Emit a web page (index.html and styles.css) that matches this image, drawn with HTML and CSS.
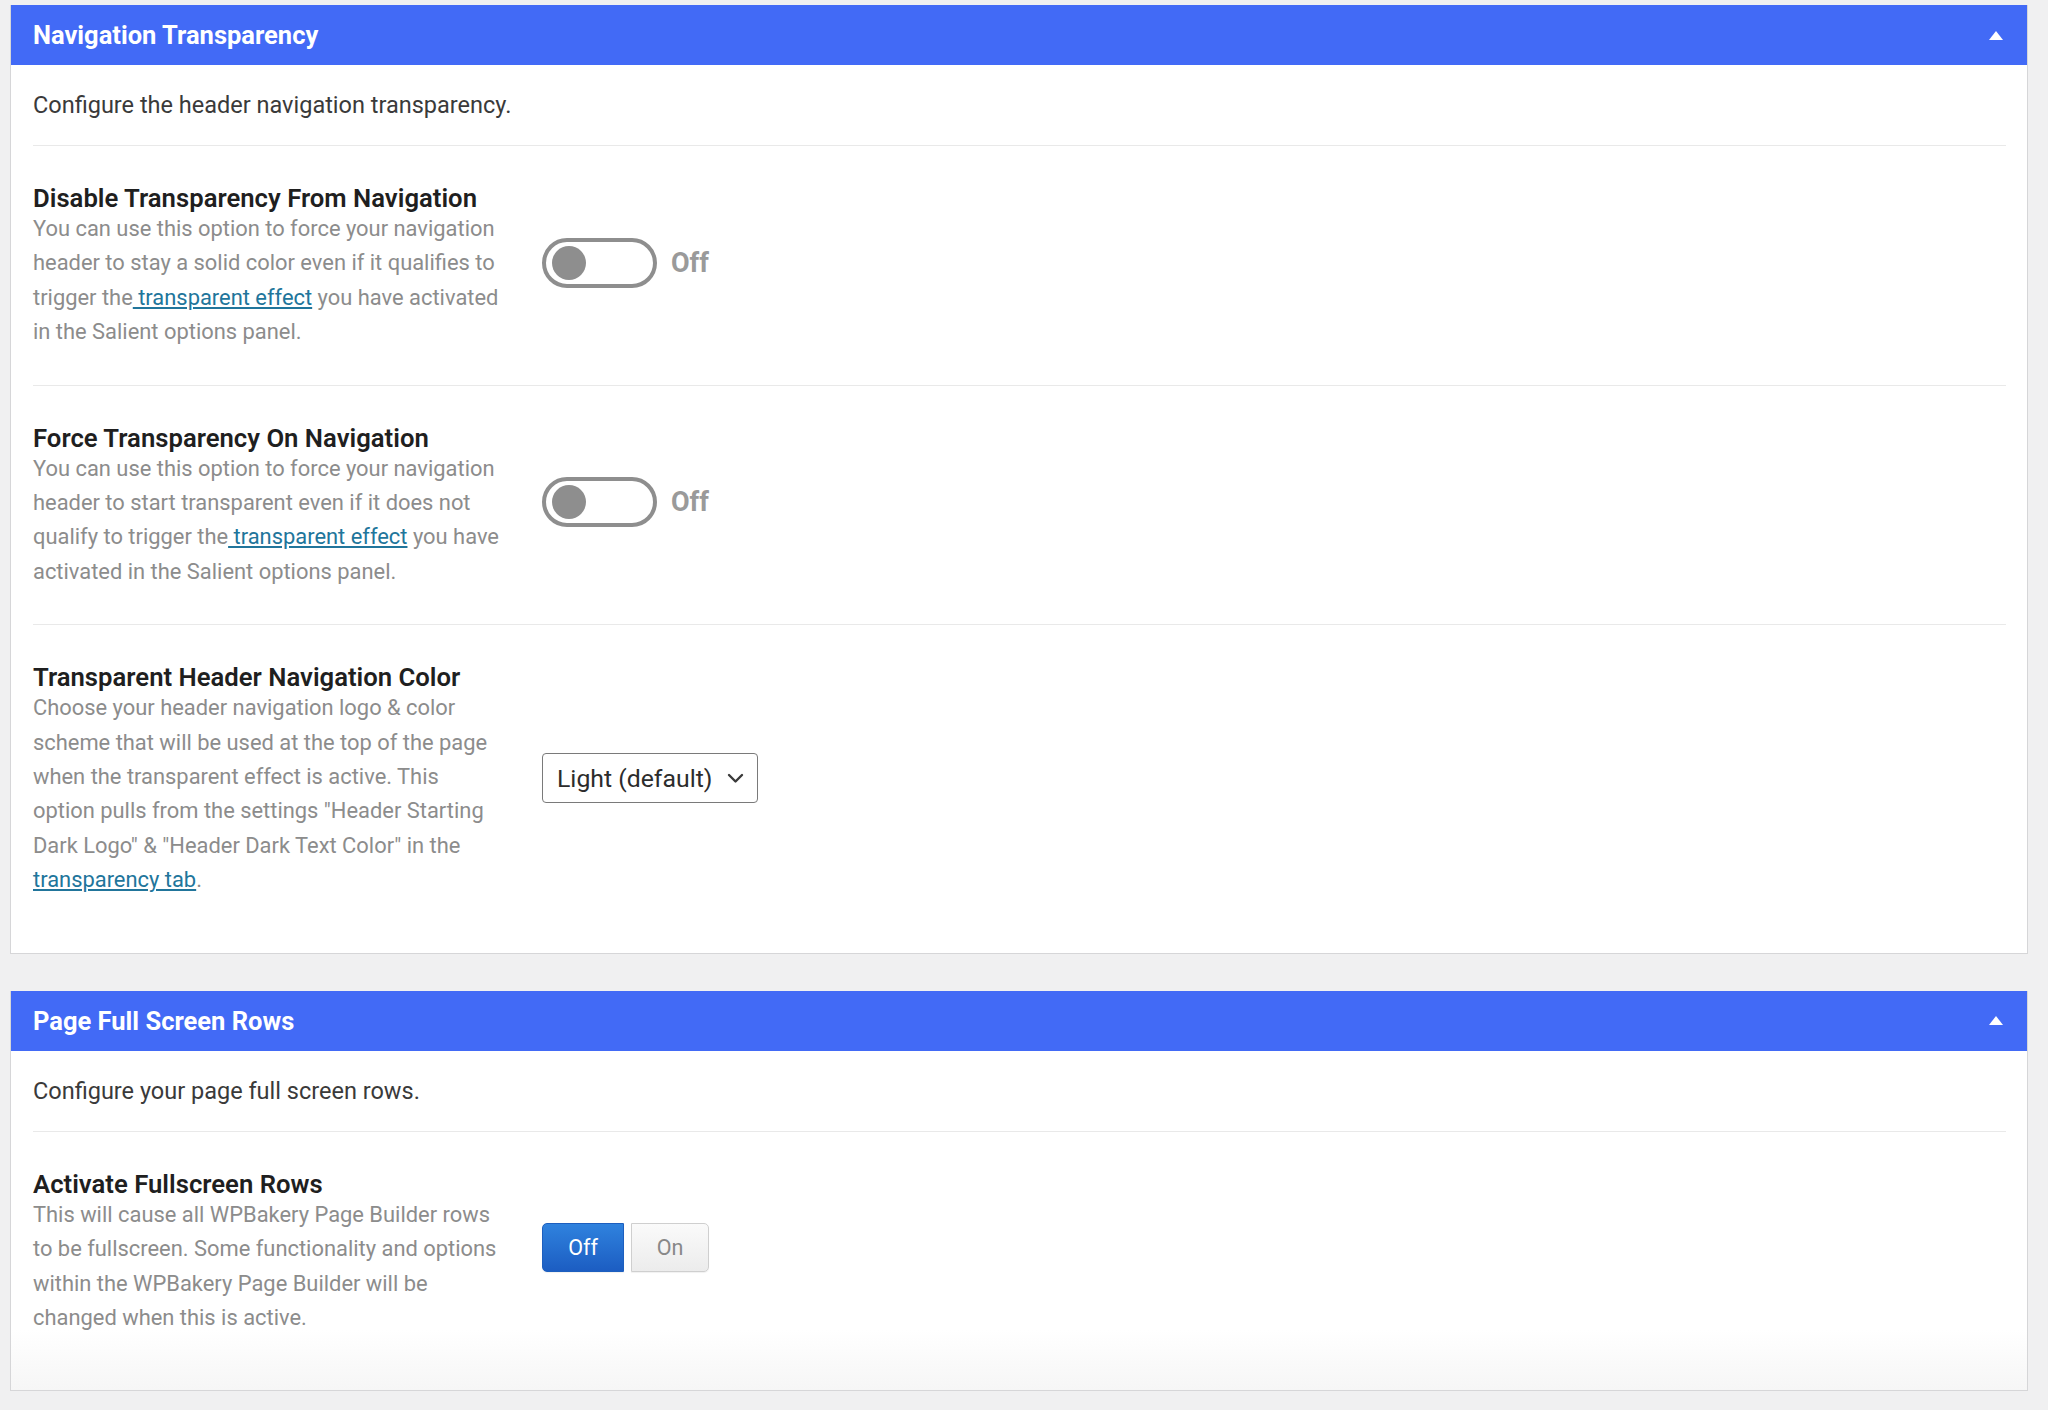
FILE: index.html
```html
<!DOCTYPE html>
<html lang="en">
<head>
<meta charset="utf-8">
<title>Theme Options</title>
<link rel="stylesheet" href="styles.css">
</head>
<body>
<div class="options">

  <section class="panel">
    <header class="panel-head">
      <h2 class="panel-title">Navigation Transparency</h2>
      <span class="caret" aria-hidden="true"></span>
    </header>
    <div class="panel-body">
      <p class="intro">Configure the header navigation transparency.</p>

      <div class="option">
        <div class="option-text">
          <h3 class="option-title">Disable Transparency From Navigation</h3>
          <p class="option-desc">You can use this option to force your navigation<br>header to stay a solid color even if it qualifies to<br>trigger the<a href="#"> transparent effect</a> you have activated<br>in the Salient options panel.</p>
        </div>
        <div class="option-control">
          <span class="switch"><span class="knob"></span></span>
          <span class="switch-label">Off</span>
        </div>
      </div>

      <div class="option">
        <div class="option-text">
          <h3 class="option-title">Force Transparency On Navigation</h3>
          <p class="option-desc">You can use this option to force your navigation<br>header to start transparent even if it does not<br>qualify to trigger the<a href="#"> transparent effect</a> you have<br>activated in the Salient options panel.</p>
        </div>
        <div class="option-control">
          <span class="switch"><span class="knob"></span></span>
          <span class="switch-label">Off</span>
        </div>
      </div>

      <div class="option option-last">
        <div class="option-text">
          <h3 class="option-title">Transparent Header Navigation Color</h3>
          <p class="option-desc">Choose your header navigation logo &amp; color<br>scheme that will be used at the top of the page<br>when the transparent effect is active. This<br>option pulls from the settings "Header Starting<br>Dark Logo" &amp; "Header Dark Text Color" in the<br><a href="#">transparency tab</a>.</p>
        </div>
        <div class="option-control">
          <div class="select">
            <span class="select-value">Light (default)</span>
            <svg class="chevron" width="17" height="11" viewBox="0 0 17 11"><polyline points="2,2 8.5,8.5 15,2" fill="none" stroke="#3a3a3a" stroke-width="2.4" stroke-linecap="round" stroke-linejoin="round"/></svg>
          </div>
        </div>
      </div>
    </div>
  </section>

  <section class="panel panel-footer">
    <header class="panel-head">
      <h2 class="panel-title">Page Full Screen Rows</h2>
      <span class="caret" aria-hidden="true"></span>
    </header>
    <div class="panel-body">
      <p class="intro">Configure your page full screen rows.</p>

      <div class="option option-last">
        <div class="option-text">
          <h3 class="option-title">Activate Fullscreen Rows</h3>
          <p class="option-desc">This will cause all WPBakery Page Builder rows<br>to be fullscreen. Some functionality and options<br>within the WPBakery Page Builder will be<br>changed when this is active.</p>
        </div>
        <div class="option-control">
          <div class="btn-set">
            <span class="btn btn-active">Off</span>
            <span class="btn">On</span>
          </div>
        </div>
      </div>
    </div>
  </section>

</div>
</body>
</html>
```

FILE: styles.css
```css
* {
  box-sizing: border-box;
}

html, body {
  margin: 0;
  padding: 0;
  background: #f0f0f1;
}

body {
  font-family: Roboto, "Noto Sans", "Liberation Sans", sans-serif;
  color: #333;
}

.options {
  padding: 5px 20px 0 10px;
}

/* ---- panel ---- */
.panel {
  background: #fff;
  border: 1px solid #d6d6d8;
  border-top: 0;
}

.panel + .panel {
  margin-top: 37px;
}

.panel-head {
  height: 60px;
  padding: 0 24px 0 22px;
  background: #426af6;
  display: flex;
  align-items: center;
  justify-content: space-between;
}

.panel-title {
  margin: 0;
  font-size: 25.5px;
  font-weight: 700;
  color: #fff;
}

.caret {
  width: 0;
  height: 0;
  border-left: 7px solid transparent;
  border-right: 7px solid transparent;
  border-bottom: 9px solid #fff;
}

.panel-body {
  padding: 0 21px 0 22px;
}

.panel-footer .panel-body {
  background: linear-gradient(to bottom, #fff calc(100% - 60px), #f6f6f6);
}

.intro {
  margin: 0;
  padding: 26px 0 26px;
  font-size: 23.5px;
  line-height: 28px;
  color: #3a3a3a;
  border-bottom: 1px solid #e9e9e9;
}

/* ---- option rows ---- */
.option {
  display: flex;
  align-items: center;
  padding: 38px 0 35px;
  border-bottom: 1px solid #e9e9e9;
}

.option-last {
  border-bottom: 0;
  padding-bottom: 55px;
}

.option-text {
  flex: 0 0 509px;
  white-space: nowrap;
}

.option-title {
  margin: 0;
  font-size: 25.7px;
  line-height: 28px;
  font-weight: 600;
  color: #1f1f1f;
}

.option-desc {
  margin: 0;
  font-size: 21.9px;
  line-height: 34.4px;
  color: #8c8c8c;
}

.option-desc a {
  color: #21759b;
  text-decoration: underline;
}

.option-control {
  display: flex;
  align-items: center;
  gap: 14px;
  margin-bottom: 8px;
}

/* ---- switch ---- */
.switch {
  width: 115px;
  height: 50px;
  border: 4px solid #8e8e8e;
  border-radius: 25px;
  padding: 4px 6px;
  display: flex;
  align-items: center;
}

.knob {
  width: 34px;
  height: 34px;
  border-radius: 50%;
  background: #8e8e8e;
}

.switch-label {
  font-size: 27px;
  font-weight: 700;
  color: #9a9a9a;
}

/* ---- select ---- */
.select {
  width: 216px;
  height: 50px;
  margin-top: 4px;
  border: 1.5px solid #7a7a7a;
  border-radius: 4px;
  padding: 0 13px 0 14px;
  display: flex;
  align-items: center;
  justify-content: space-between;
  background: #fff;
}

.select-value {
  font-size: 24.8px;
  color: #2c2c2c;
}

/* ---- button set ---- */
.btn-set {
  display: flex;
  gap: 7px;
  margin-bottom: 2px;
}

.btn {
  height: 49px;
  display: flex;
  align-items: center;
  justify-content: center;
  font-size: 21.5px;
  border-radius: 0 5px 5px 0;
  border: 1px solid #cfcfcf;
  width: 78px;
  color: #888;
  background: linear-gradient(to bottom, #fafafa, #ececec);
  box-shadow: 0 1px 1px rgba(0, 0, 0, 0.06);
}

.btn-active {
  width: 82px;
  border-radius: 5px 0 0 5px;
  border-color: #1d5fbf;
  color: #fff;
  background: linear-gradient(to bottom, #2f82de, #1c5dc2);
}
```
